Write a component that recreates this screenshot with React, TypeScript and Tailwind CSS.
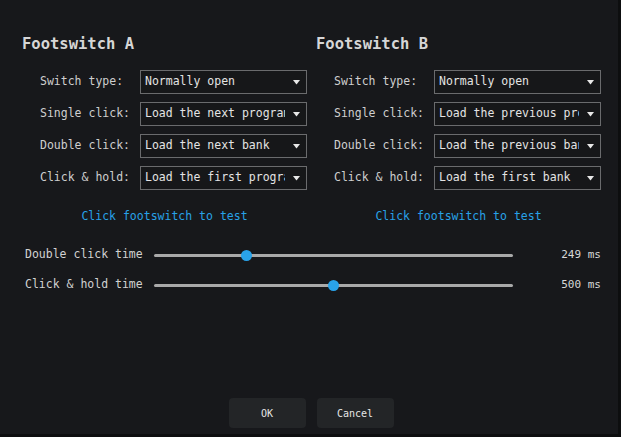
const mono = { fontFamily: '"DejaVu Sans Mono", "Liberation Mono", monospace' };

function Select({ value }: { value: string }) {
  return (
    <div className="flex h-[24px] w-[167px] items-center border border-[#6a6b6d] bg-[#161719] pl-[4px] pr-[6px]">
      <span className="flex-1 overflow-hidden whitespace-nowrap text-[11.5px] text-[#e4e4e4]">{value}</span>
      <svg width="7" height="5" viewBox="0 0 7 5" className="ml-[8px] shrink-0">
        <path d="M0 0H7L3.5 4.5Z" fill="#e8e8e8" />
      </svg>
    </div>
  );
}

function Footswitch({ name, rows }: { name: string; rows: [string, string][] }) {
  return (
    <div className="flex w-[285px] flex-col">
      <h2 className="h-[20px] text-[15.5px] leading-[20px] font-semibold text-[#d6d6d6]">{name}</h2>
      <div className="mt-[16px] flex flex-col gap-[8px]">
        {rows.map(([label, value]) => (
          <div key={label} className="flex items-center pl-[18px]">
            <span className="w-[100px] text-[11.5px] text-[#cfcfcf]">{label}</span>
            <Select value={value} />
          </div>
        ))}
      </div>
      <p className="mt-[18px] h-[16px] text-center text-[11.5px] leading-[16px] text-[#28a2e8]">
        Click footswitch to test
      </p>
    </div>
  );
}

function Slider({ label, value, max, unit }: { label: string; value: number; max: number; unit: string }) {
  const pct = value / max;
  return (
    <div className="flex h-[20px] items-center">
      <span className="w-[129px] text-[11.5px] text-[#d2d2d2]">{label}</span>
      <div className="relative h-[12px] flex-1">
        <div className="absolute top-[4.5px] right-0 left-0 h-[3px] rounded-full bg-[#a9a9a9]" />
        <div
          className="absolute top-[0.5px] h-[11px] w-[11px] rounded-full bg-[#29a3ea]"
          style={{ left: `calc(${pct} * (100% - 11px))` }}
        />
      </div>
      <span className="w-[88px] text-right text-[11px] text-[#d8d8d8]">
        {value} {unit}
      </span>
    </div>
  );
}

export default function App() {
  return (
    <div className="h-[437px] w-[621px] bg-[#0d0e0f]" style={mono}>
      <div className="flex h-[434px] w-[618px] flex-col bg-[#17181b] px-[22px] pt-[34px] pb-[6px]">
        <div className="flex gap-[9px]">
          <Footswitch
            name="Footswitch A"
            rows={[
              ["Switch type:", "Normally open"],
              ["Single click:", "Load the next program"],
              ["Double click:", "Load the next bank"],
              ["Click & hold:", "Load the first program"],
            ]}
          />
          <Footswitch
            name="Footswitch B"
            rows={[
              ["Switch type:", "Normally open"],
              ["Single click:", "Load the previous program"],
              ["Double click:", "Load the previous bank"],
              ["Click & hold:", "Load the first bank"],
            ]}
          />
        </div>

        <div className="mt-[21px] flex w-[579px] flex-col gap-[10px] pl-[3px]">
          <Slider label="Double click time" value={249} max={1000} unit="ms" />
          <Slider label="Click & hold time" value={500} max={1000} unit="ms" />
        </div>

        <div className="mt-auto flex justify-center gap-[11px] pl-[4px]">
          <button className="h-[30px] w-[77px] rounded-[4px] bg-[#232527] text-[10px] text-[#e6e6e6]">OK</button>
          <button className="h-[30px] w-[77px] rounded-[4px] bg-[#232527] text-[10px] text-[#e6e6e6]">Cancel</button>
        </div>
      </div>
    </div>
  );
}
